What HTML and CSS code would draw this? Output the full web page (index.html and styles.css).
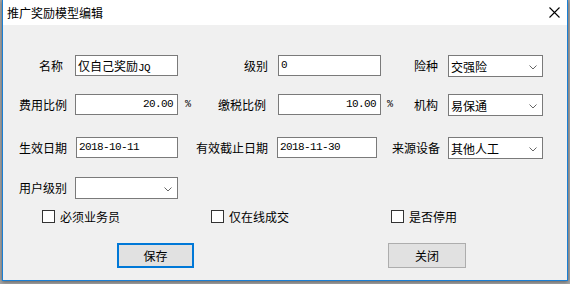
FILE: index.html
```html
<!DOCTYPE html>
<html>
<head>
<meta charset="utf-8">
<link rel="stylesheet" href="styles.css">
</head>
<body>
<div class="window">
  <div class="titlebar">
    <span class="title">推广奖励模型编辑</span>
    <span class="close"><svg width="11" height="11" viewBox="0 0 11 11"><path d="M0.5 0.5L10.5 10.5M10.5 0.5L0.5 10.5" stroke="#000" stroke-width="1.1"/></svg></span>
  </div>
  <div class="form">
    <label class="lbl lbl-name">名称</label>
    <div class="field"><span class="cjk">仅自己奖励</span>JQ</div>
    <span></span>
    <label class="lbl lbl2">级别</label>
    <div class="field">0</div>
    <span></span>
    <label class="lbl lbl3">险种</label>
    <div class="select"><span>交强险</span><svg class="chev" width="8" height="5" viewBox="0 0 8 5"><path d="M0.5 0.5L4 4L7.5 0.5" fill="none" stroke="#666" stroke-width="1"/></svg></div>

    <label class="lbl">费用比例</label>
    <div class="field num wide">20.00</div>
    <span class="pct">%</span>
    <label class="lbl lbl2b">缴税比例</label>
    <div class="field num">10.00</div>
    <span class="pct pct2">%</span>
    <label class="lbl lbl3">机构</label>
    <div class="select"><span>易保通</span><svg class="chev" width="8" height="5" viewBox="0 0 8 5"><path d="M0.5 0.5L4 4L7.5 0.5" fill="none" stroke="#666" stroke-width="1"/></svg></div>

    <label class="lbl">生效日期</label>
    <div class="field date1">2018-10-11</div>
    <span></span>
    <label class="lbl lbl2">有效截止日期</label>
    <div class="field date2">2018-11-30</div>
    <span></span>
    <label class="lbl lbl3b">来源设备</label>
    <div class="select"><span>其他人工</span><svg class="chev" width="8" height="5" viewBox="0 0 8 5"><path d="M0.5 0.5L4 4L7.5 0.5" fill="none" stroke="#666" stroke-width="1"/></svg></div>

    <label class="lbl">用户级别</label>
    <div class="select"><span></span><svg class="chev" width="8" height="5" viewBox="0 0 8 5"><path d="M0.5 0.5L4 4L7.5 0.5" fill="none" stroke="#666" stroke-width="1"/></svg></div>
  </div>
  <div class="checks">
    <div class="check c1"><span class="box"></span><span>必须业务员</span></div>
    <div class="check c2"><span class="box"></span><span>仅在线成交</span></div>
    <div class="check"><span class="box"></span><span>是否停用</span></div>
  </div>
  <div class="buttons">
    <div class="btn default">保存</div>
    <div class="btn close-btn">关闭</div>
  </div>
</div>
</body>
</html>
```
FILE: styles.css
```css
html, body {
  margin: 0;
  padding: 0;
}
body {
  width: 570px;
  height: 284px;
  overflow: hidden;
  background: #a8a8a8;
  font-family: "Noto Sans CJK SC", "Noto Sans", sans-serif;
  font-size: 12px;
  color: #000;
}
.window {
  margin-left: 2px;
  width: 566px;
  height: 281px;
  box-sizing: border-box;
  border: 1px solid #1a7fd4;
  border-top: none;
  background: #f0f0f0;
  box-shadow: 0 1px 4px rgba(0, 0, 0, 0.45);
}
.titlebar {
  height: 25px;
  background: #fff;
  display: flex;
  align-items: center;
  justify-content: space-between;
  padding-left: 4px;
}
.title {
  line-height: 25px;
}
.close {
  width: 26px;
  height: 25px;
  display: flex;
  align-items: center;
  justify-content: center;
}
.form {
  display: grid;
  grid-template-columns: 63px 103px 18px 82px 103px 19px 48px 95px;
  grid-template-rows: 39px 43px 40px 22px;
  padding: 30px 0 0 9px;
  align-items: start;
}
.lbl {
  height: 21px;
  display: flex;
  justify-content: flex-end;
  align-items: center;
  padding-right: 8px;
  white-space: nowrap;
}
.lbl-name { padding-right: 12px; }
.lbl2 { padding-right: 10px; }
.lbl2b { padding-right: 12px; }
.lbl3 { padding-right: 10px; }
.lbl3b { padding-right: 8px; }
.field {
  box-sizing: border-box;
  height: 21px;
  border: 1px solid #7a7a7a;
  background: #fff;
  font-family: "Liberation Mono", "DejaVu Sans Mono", monospace;
  font-size: 11px;
  letter-spacing: -0.6px;
  line-height: 19px;
  padding: 0 2px;
  white-space: nowrap;
  overflow: hidden;
}
.field .cjk {
  font-family: "Noto Sans CJK SC", sans-serif;
  font-size: 12px;
  letter-spacing: 0;
}
.num {
  text-align: right;
  padding-right: 4px;
}
.date1 {
  margin-left: 1px;
}
.date2 {
  margin-left: -1px;
  width: 100px;
}
.pct {
  font-family: "Liberation Mono", monospace;
  font-size: 10px;
  line-height: 21px;
  padding-left: 7px;
}
.pct2 { padding-left: 6px; }
.select {
  box-sizing: border-box;
  height: 22px;
  border: 1px solid #7a7a7a;
  background: #fff;
  display: flex;
  align-items: center;
  justify-content: space-between;
  padding: 0 5px 0 2px;
  white-space: nowrap;
}
.chev {
  display: block;
  margin-top: 2px;
}
.checks {
  display: flex;
  margin-top: 11px;
  padding-left: 39px;
  height: 13px;
}
.check {
  display: flex;
  align-items: center;
  gap: 5px;
  height: 13px;
  white-space: nowrap;
}
.c1 { width: 169px; }
.c2 { width: 180px; }
.box {
  box-sizing: border-box;
  width: 13px;
  height: 13px;
  border: 1px solid #333;
  background: #fff;
}
.buttons {
  display: flex;
  margin-top: 20px;
  padding-left: 114px;
}
.btn {
  box-sizing: border-box;
  width: 77px;
  height: 25px;
  background: #e1e1e1;
  border: 1px solid #adadad;
  display: flex;
  align-items: center;
  justify-content: center;
}
.btn.default {
  border: 2px solid #0078d7;
}
.close-btn {
  margin-left: 194px;
  width: 78px;
}
```
